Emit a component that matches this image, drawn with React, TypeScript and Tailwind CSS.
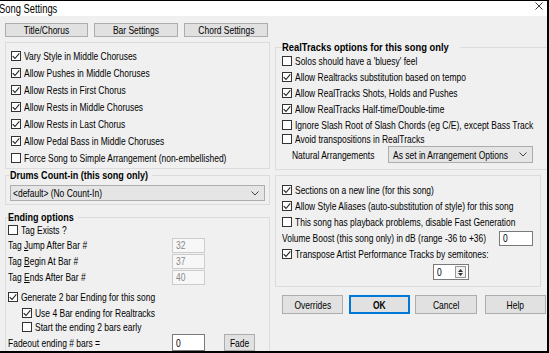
import clsx from 'clsx';
import { twMerge } from 'tailwind-merge';
import type { ReactNode } from 'react';

const cn = (...args: Parameters<typeof clsx>) => twMerge(clsx(args));

// the dialog font is narrow: scale Arial-width glyphs horizontally
function T({ children, className }: { children: ReactNode; className?: string }) {
    return <span className={cn('inline-block whitespace-nowrap origin-left scale-x-[0.77]', className)}>{children}</span>;
}

function Check({ on }: { on?: boolean }) {
    return (
        <span className="w-[10px] h-[10px] shrink-0 border border-[#333333] bg-white flex items-center justify-center">
            {on && (
                <svg width="8" height="8" viewBox="0 0 8 8">
                    <path d="M0.7 4.1 L3 6.5 L7.3 1.3" fill="none" stroke="#202020" strokeWidth="1.1" />
                </svg>
            )}
        </span>
    );
}

function CheckRow({ on, label, className }: { on?: boolean; label: ReactNode; className?: string }) {
    return (
        <div className={cn('flex items-center gap-[3px] whitespace-nowrap', className)}>
            <Check on={on} />
            <T>{label}</T>
        </div>
    );
}

function Btn({ children, className }: { children: ReactNode; className?: string }) {
    return (
        <div className={cn('flex items-center justify-center bg-[#e1e1e1] border border-[#adadad] shrink-0', className)}>
            <T className="origin-center">{children}</T>
        </div>
    );
}

function Chevron() {
    return (
        <svg width="8" height="5" viewBox="0 0 8 5" className="shrink-0">
            <path d="M0.5 0.5 L4 4 L7.5 0.5" fill="none" stroke="#444" strokeWidth="1" />
        </svg>
    );
}

function TagRow({ label, value }: { label: ReactNode; value: string }) {
    return (
        <div className="flex items-center h-[16px]">
            <div className="w-[166px] pl-[2px] shrink-0"><T>{label}</T></div>
            <div className="w-[33px] h-[15px] border border-[#cccccc] bg-[#f7f7f7] text-[#8a8a8a] pl-[3px] flex items-center">
                <T>{value}</T>
            </div>
        </div>
    );
}

function Legend({ children, className, scale = 'scale-x-[0.86]' }: { children: ReactNode; className?: string; scale?: string }) {
    return (
        <legend className={cn('font-bold text-[10.5px] leading-[12px] whitespace-nowrap', className)}>
            <span className={cn('inline-block origin-left', scale)}>{children}</span>
        </legend>
    );
}

export default function App() {
    return (
        <div className="w-[549px] h-[353px] overflow-hidden font-['Liberation_Sans',Arial,sans-serif] text-[11px] leading-[12px] text-black">
            <div className="w-[549px] h-[353px] bg-[#f0f0f0] border-t border-r-2 border-b-2 border-black flex flex-col">
                {/* Title bar */}
                <div className="h-[15px] bg-white flex items-center justify-between shrink-0">
                    <T className="text-[12px] ml-[-1px] scale-x-[0.78]">Song Settings</T>
                    <svg width="8" height="8" viewBox="0 0 8 8" className="mr-[4px] mt-[-6px]">
                        <path d="M0.5 0.5 L7.5 7.5 M7.5 0.5 L0.5 7.5" stroke="#222" strokeWidth="0.9" />
                    </svg>
                </div>

                <div className="flex flex-1 overflow-hidden">
                    {/* Left column */}
                    <div className="ml-[5px] w-[265px] shrink-0 pt-[7px] flex flex-col">
                        <div className="flex gap-[6px]">
                            <Btn className="w-[83px] h-[14px]">Title/Chorus</Btn>
                            <Btn className="w-[84px] h-[14px]">Bar Settings</Btn>
                            <Btn className="w-[84px] h-[14px]">Chord Settings</Btn>
                        </div>

                        <div className="mt-[5px] border border-[#dcdcdc] pt-[4px] pb-[2px] pl-[5px] flex flex-col">
                            <CheckRow on className="h-[17px]" label="Vary Style in Middle Choruses" />
                            <CheckRow on className="h-[17px]" label="Allow Pushes in Middle Choruses" />
                            <CheckRow on className="h-[17px]" label="Allow Rests in First Chorus" />
                            <CheckRow on className="h-[17px]" label="Allow Rests in Middle Choruses" />
                            <CheckRow on className="h-[17px]" label="Allow Rests in Last Chorus" />
                            <CheckRow on className="h-[17px]" label="Allow Pedal Bass in Middle Choruses" />
                            <CheckRow className="h-[17px]" label="Force Song to Simple Arrangement (non-embellished)" />
                        </div>

                        <fieldset className="border border-[#dcdcdc] pb-[3px]">
                            <Legend className="ml-[4px] w-[142px]">Drums Count-in (this song only)</Legend>
                            <div className="mt-[4px] mx-[4px] h-[16px] border border-[#adadad] bg-[#e5e5e5] flex items-center pl-[2px] pr-[5px]">
                                <div className="w-[120px] shrink-0"><T>&lt;default&gt; (No Count-In)</T></div>
                                <div className="ml-auto"><Chevron /></div>
                            </div>
                        </fieldset>

                        <fieldset className="mt-[6px] border border-[#dcdcdc] pb-[20px]">
                            <Legend className="ml-[2px] w-[70px]">Ending options</Legend>
                            <CheckRow className="h-[14px] pl-[2px]" label="Tag Exists ?" />
                            <TagRow label={<>Tag <u>J</u>ump After Bar #</>} value="32" />
                            <TagRow label={<>Tag <u>B</u>egin At Bar #</>} value="37" />
                            <TagRow label={<>Tag <u>E</u>nds After Bar #</>} value="40" />
                            <CheckRow on className="h-[16px] mt-[4px] pl-[2px]" label="Generate 2 bar Ending for this song" />
                            <CheckRow on className="h-[15px] pl-[16px]" label="Use 4 Bar ending for Realtracks" />
                            <CheckRow className="h-[14px] pl-[16px]" label="Start the ending 2 bars early" />
                            <div className="flex items-center h-[17px]">
                                <div className="w-[166px] pl-[2px] shrink-0"><T>Fadeout ending # bars =</T></div>
                                <div className="w-[33px] h-[17px] border border-[#7a7a7a] bg-white pl-[3px] flex items-center"><T>0</T></div>
                                <Btn className="ml-[19px] w-[31px] h-[17px]">Fade</Btn>
                            </div>
                        </fieldset>
                    </div>

                    {/* Right column */}
                    <div className="ml-[5px] w-[272px] shrink-0 pt-[25px] flex flex-col">
                        <fieldset className="w-[266px] border border-[#dcdcdc] pl-[6px] pb-[6px]">
                            <Legend className="w-[178px]" scale="scale-x-[0.89]">RealTracks options for this song only</Legend>
                            <CheckRow className="h-[16px]" label="Solos should have a 'bluesy' feel" />
                            <CheckRow on className="h-[16px]" label="Allow Realtracks substitution based on tempo" />
                            <CheckRow on className="h-[16px]" label="Allow RealTracks Shots, Holds and Pushes" />
                            <CheckRow on className="h-[16px]" label="Allow RealTracks Half-time/Double-time" />
                            <CheckRow className="h-[15px]" label="Ignore Slash Root of Slash Chords (eg C/E), except Bass Track" />
                            <CheckRow className="h-[14px]" label="Avoid transpositions in RealTracks" />
                            <div className="flex items-center h-[17px] pl-[10px]">
                                <div className="w-[96px] shrink-0"><T>Natural Arrangements</T></div>
                                <div className="w-[145px] h-[17px] shrink-0 border border-[#adadad] bg-[#e5e5e5] flex items-center pl-[4px] pr-[5px]">
                                    <div className="w-[115px] shrink-0"><T>As set in Arrangement Options</T></div>
                                    <div className="ml-auto"><Chevron /></div>
                                </div>
                            </div>
                        </fieldset>

                        <div className="mt-[5px] w-[266px] border border-[#dcdcdc] pt-[6px] pb-[6px] pl-[6px] pr-[7px] flex flex-col">
                            <CheckRow on className="h-[16px]" label="Sections on a new line (for this song)" />
                            <CheckRow on className="h-[16px]" label="Allow Style Aliases (auto-substitution of style) for this song" />
                            <CheckRow className="h-[16px]" label="This song has playback problems, disable Fast Generation" />
                            <div className="flex items-center h-[16px]">
                                <div className="w-[200px] shrink-0"><T>Volume Boost (this song only) in dB (range -36 to +36)</T></div>
                                <div className="ml-auto w-[34px] h-[15px] border border-[#7a7a7a] bg-white pl-[3px] flex items-center"><T>0</T></div>
                            </div>
                            <CheckRow on className="h-[15px]" label="Transpose Artist Performance Tracks by semitones:" />
                            <div className="mt-[3px] ml-[151px] w-[36px] h-[16px] border border-[#7a7a7a] bg-white flex items-center justify-between pl-[3px] pr-[2px]">
                                <T>0</T>
                                <div className="w-[11px] h-[12px] border border-[#999] bg-[#f0f0f0] flex flex-col items-center justify-center gap-[1px]">
                                    <svg width="5" height="3" viewBox="0 0 5 3"><path d="M0 3 L2.5 0 L5 3 Z" fill="#333" /></svg>
                                    <svg width="5" height="3" viewBox="0 0 5 3"><path d="M0 0 L2.5 3 L5 0 Z" fill="#333" /></svg>
                                </div>
                            </div>
                        </div>

                        <div className="mt-[8px] flex items-center">
                            <Btn className="ml-[7px] w-[61px] h-[19px]">Overrides</Btn>
                            <Btn className="ml-[6px] w-[61px] h-[19px] border-2 border-[#0078d7] font-bold">OK</Btn>
                            <Btn className="ml-[5px] w-[62px] h-[19px]">Cancel</Btn>
                            <Btn className="ml-[8px] w-[61px] h-[19px]">Help</Btn>
                        </div>
                    </div>
                </div>
            </div>
        </div>
    );
}
